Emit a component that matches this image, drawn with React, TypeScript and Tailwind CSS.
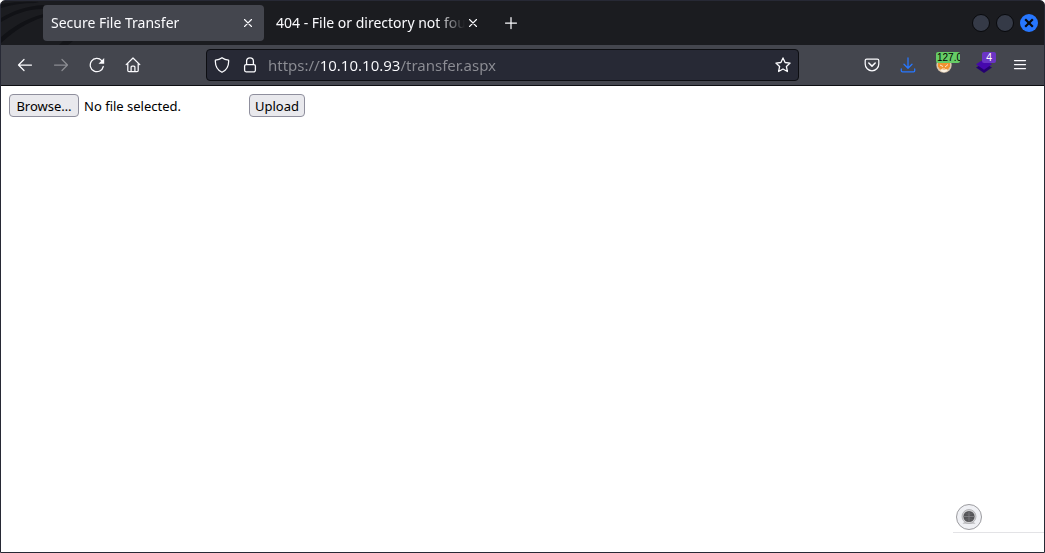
import { useRef, useState } from "react";
import type { ReactNode } from "react";

function ToolButton({ label, children, dim = false }: { label: string; children: ReactNode; dim?: boolean }) {
  return (
    <button
      type="button"
      aria-label={label}
      disabled={dim}
      className="relative flex size-9 shrink-0 items-center justify-center rounded text-[#fbfbfe] disabled:text-[#8b8c92]"
    >
      {children}
    </button>
  );
}

function Icon({ children }: { children: ReactNode }) {
  return (
    <svg
      viewBox="0 0 16 16"
      className="size-4"
      fill="none"
      stroke="currentColor"
      strokeWidth="1.25"
      strokeLinecap="round"
      strokeLinejoin="round"
      aria-hidden="true"
    >
      {children}
    </svg>
  );
}

function Tab({ title, active = false }: { title: string; active?: boolean }) {
  return (
    <div
      className={
        active
          ? "flex h-9 w-[221px] items-center rounded bg-[#44464e] px-2"
          : "flex h-9 w-[221px] items-center rounded px-2"
      }
    >
      <button
        type="button"
        role="tab"
        aria-selected={active}
        className="min-w-0 flex-1 overflow-hidden text-left text-[14px] leading-[22px] whitespace-nowrap text-[#fbfbfe] [mask-image:linear-gradient(to_right,black_calc(100%-28px),transparent)]"
      >
        {title}
      </button>
      <button type="button" aria-label={"Close " + title} className="flex size-4 items-center justify-center text-[#fbfbfe]">
        <svg viewBox="0 0 16 16" className="size-4" fill="none" stroke="currentColor" strokeWidth="1.1" strokeLinecap="round" aria-hidden="true">
          <path d="M4.500 4.500l7 7M11.500 4.500l-7 7" />
        </svg>
      </button>
    </div>
  );
}

function TitleBar() {
  return (
    <header className="relative flex h-11 items-center bg-[#1b1c20] pr-[6px] pl-[42px]">
      <svg viewBox="0 0 76 44" className="absolute top-0 left-0 h-11 w-[76px]" fill="none" aria-hidden="true">
        <path d="M0 17C12 10 25 5 43 4L42 8C25 8 12 14 0 21z" fill="#111216" />
        <path d="M0 36C12 26 25 17 43 13L43 16C26 21 12 31 0 42z" fill="#111216" />
        <path d="M0 3Q18 0 38 1L34 2Q16 2 0 7z" fill="#121317" />
        <path d="M62 40h10l-5 4h-9z" fill="#131418" />
      </svg>
      <div role="tablist" className="relative flex gap-1">
        <Tab title="Secure File Transfer" active />
        <Tab title="404 - File or directory not found." />
      </div>
      <button type="button" aria-label="New tab" className="ml-1 flex size-9 items-center justify-center text-[#fbfbfe]">
        <Icon>
          <path d="M8 2.500v11M2.500 8h11" />
        </Icon>
      </button>
      <div className="ml-auto flex gap-[6px]">
        <button type="button" aria-label="Minimize" className="size-[18px] rounded-full border border-[#08090c] bg-[#353a47]" />
        <button type="button" aria-label="Maximize" className="size-[18px] rounded-full border border-[#08090c] bg-[#353a47]" />
        <button type="button" aria-label="Close window" className="flex size-[18px] items-center justify-center rounded-full bg-[#2777ff] text-[#08090c]">
          <svg viewBox="0 0 18 18" className="size-[18px]" fill="none" stroke="currentColor" strokeWidth="2.200" aria-hidden="true">
            <path d="M5.200 5.200l7.600 7.600M12.800 5.200l-7.600 7.600" />
          </svg>
        </button>
      </div>
    </header>
  );
}

function AddressBar() {
  const [url, setUrl] = useState("https://10.10.10.93/transfer.aspx");
  return (
    <div className="mx-[55px] flex h-8 min-w-0 flex-1 items-center rounded border border-[#0d0e12] bg-[#272935] px-[7px] text-[#fbfbfe]">
      <svg viewBox="0 0 16 16" className="size-4 shrink-0" fill="none" stroke="currentColor" strokeWidth="1.25" strokeLinejoin="round" aria-hidden="true">
        <path d="M8 .7C6.7 1.8 3.8 3 1.4 3.1C1 8.7 3.4 13 8 15.3C12.600 13 15 8.700 14.600 3.100C12.200 3 9.300 1.800 8 .7z" />
      </svg>
      <svg viewBox="0 0 16 16" className="ml-3 size-4 shrink-0" fill="none" stroke="currentColor" strokeWidth="1.3" aria-hidden="true">
        <rect x="2.600" y="7.600" width="10.800" height="7.200" rx="1.500" />
        <path d="M4.600 7.600V4.300a3.400 3.400 0 0 1 6.800 0V7.600" />
      </svg>
      <input
        type="text"
        aria-label="Address"
        value={url}
        onChange={(event) => setUrl(event.target.value)}
        spellCheck={false}
        className="ml-[10px] min-w-0 flex-1 bg-[linear-gradient(to_right,#8c8d94_51px,#fbfbfe_51px,#fbfbfe_132px,#8c8d94_132px)] bg-clip-text text-[15px] leading-5 text-transparent caret-white outline-none"
      />
      <button type="button" aria-label="Bookmark this page" className="flex size-4 shrink-0 items-center justify-center">
        <svg viewBox="0 0 16 16" className="size-4" fill="none" stroke="currentColor" strokeWidth="1.3" strokeLinejoin="round" aria-hidden="true">
          <path d="M8 .9l2.100 4.600 5 .6-3.700 3.400 1 5L8 12l-4.400 2.500 1-5L.9 6.100l5-.6z" />
        </svg>
      </button>
    </div>
  );
}

function Toolbar() {
  return (
    <nav aria-label="Navigation" className="flex h-10 items-center bg-[#44464e] px-[6px]">
      <ToolButton label="Back">
        <Icon><path d="M14.500 8H1.700M7 2.500L1.500 8 7 13.500" /></Icon>
      </ToolButton>
      <ToolButton label="Forward" dim>
        <Icon><path d="M1.500 8h12.800M9 2.500L14.500 8 9 13.500" /></Icon>
      </ToolButton>
      <ToolButton label="Reload">
        <Icon>
          <path d="M14.300 9.500A6.600 6.600 0 1 1 12.700 3.600" />
          <path d="M15.200 1v5.700H9.500z" fill="currentColor" stroke="none" />
        </Icon>
      </ToolButton>
      <ToolButton label="Home">
        <Icon>
          <path d="M1.200 7.600L8 1l6.800 6.600M2.800 6.800v6.700c0 .7.500 1.200 1.200 1.200h8c.7 0 1.200-.5 1.200-1.200V6.800M6.100 14.700V10c0-.6.400-1 1-1h1.800c.6 0 1 .4 1 1v4.700" />
        </Icon>
      </ToolButton>
      <AddressBar />
      <ToolButton label="Save to Pocket">
        <Icon>
          <path d="M2.700 2h10.600c.9 0 1.500.6 1.500 1.500V7a6.800 6.800 0 0 1-13.600 0V3.500C1.200 2.600 1.800 2 2.700 2z" />
          <path d="M4.800 6L8 9.100 11.200 6" strokeWidth="1.500" />
        </Icon>
      </ToolButton>
      <ToolButton label="Downloads">
        <svg viewBox="0 0 16 16" className="size-4 text-[#2777ff]" fill="none" stroke="currentColor" strokeWidth="1.300" strokeLinecap="round" strokeLinejoin="round" aria-hidden="true">
          <path d="M8 .9v10M4 7.200l4 4 4-4M1.300 12v1.800c0 .6.500 1 1.100 1h11.200c.6 0 1.100-.4 1.100-1V12" />
        </svg>
      </ToolButton>
      <ToolButton label="FoxyProxy">
        <svg viewBox="0 0 16 16" className="size-4" aria-hidden="true">
          <circle cx="8" cy="8" r="7.700" fill="#d9c6ae" />
          <path d="M2 4h12v5.500L12 12.500 8 14.500 4 12.500 2 9.500z" fill="#f0932f" />
          <path d="M4 13l2-1 2 1 2-1 2 1-2 1.800L8 15.300 6 14.800z" fill="#faf1e2" />
          <path d="M4 8l3 1.500M12 7.500l-3 2.500M6 12h3" stroke="#fbe5c8" strokeWidth="1" />
        </svg>
        <span className="absolute top-[5px] left-[10px] h-[11px] w-6 overflow-hidden rounded-[2px] bg-[#66cc66] pl-px text-left font-['Liberation_Sans'] text-[10px] leading-[11px] whitespace-nowrap text-black">
          127.0
        </span>
      </ToolButton>
      <div className="ml-1 flex">
        <ToolButton label="Wappalyzer">
          <svg viewBox="0 0 16 16" className="size-4" aria-hidden="true">
            <path d="M0 10.500l8-4.500 8 4.500L8 16z" fill="#250070" />
            <path d="M0 7.200l8-5 8 5-8 5.600z" fill="#4608ad" />
          </svg>
          <span className="absolute top-[5px] left-4 h-[11px] w-[14px] rounded-[2px] bg-[#6b35c4] text-center text-[10px] leading-[11px] text-white">4</span>
        </ToolButton>
        <ToolButton label="Open application menu">
          <Icon><path d="M2.500 3.500h11M2.500 7.500h11M2.500 11.500h11" /></Icon>
        </ToolButton>
      </div>
    </nav>
  );
}

function UploadForm() {
  const picker = useRef<HTMLInputElement>(null);
  const [fileName, setFileName] = useState("No file selected.");
  const buttonClass =
    "h-[23px] rounded border border-[#8f8f9d] bg-[#e9e9ed] px-[5px] text-[13px] leading-5 text-black";
  return (
    <form className="flex items-center p-2" onSubmit={(event) => event.preventDefault()}>
      <div className="flex w-60 items-center gap-[5px]">
        <input
          ref={picker}
          type="file"
          aria-label="File to upload"
          className="hidden"
          onChange={(event) => setFileName(event.target.files?.[0]?.name ?? "No file selected.")}
        />
        <button type="button" className={buttonClass + " min-w-[70px]"} onClick={() => picker.current?.click()}>
          Browse…
        </button>
        <span className="truncate text-[13px] leading-5 text-black">{fileName}</span>
      </div>
      <button type="submit" className={buttonClass}>
        Upload
      </button>
    </form>
  );
}

function FloatingWidget() {
  return (
    <div className="mt-auto mb-[19px] ml-auto w-[91px] border-b border-[#e3e3e6] pb-[2px] pl-[3px]">
      <button type="button" aria-label="Open tools" className="flex size-[26px] items-center justify-center rounded-full border border-[#9c9ca0] bg-[#eff0f4]">
        <svg viewBox="0 0 18 18" className="size-[18px]" fill="none" aria-hidden="true">
          <path d="M4 14h10l1.500 2h-13z" fill="#c9c9cc" />
          <circle cx="9" cy="8.500" r="7" fill="#d3d3d5" stroke="#aaaaad" strokeWidth=".8" />
          <circle cx="9" cy="8.500" r="5.600" fill="#555558" />
          <path d="M9 3.500v10M4 8.500h10" stroke="#808083" strokeWidth=".9" />
          <path d="M5.500 5.500Q9 7.500 12.500 5.500M5.500 11.500Q9 9.500 12.500 11.500" stroke="#6c6c6f" strokeWidth=".7" />
        </svg>
      </button>
    </div>
  );
}

export default function App() {
  return (
    <div className="flex min-h-screen flex-col overflow-hidden rounded-t-[5px] border border-[#272935] bg-white font-['Noto_Sans',sans-serif]">
      <div className="border-b border-[#0d0e12] bg-[#1b1c20]">
        <TitleBar />
        <Toolbar />
      </div>
      <main className="flex flex-1 flex-col">
        <UploadForm />
        <FloatingWidget />
      </main>
    </div>
  );
}
